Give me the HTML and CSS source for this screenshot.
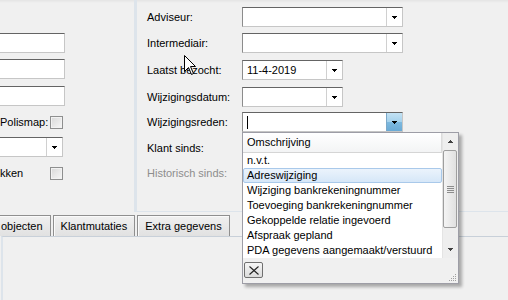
FILE: index.html
```html
<!DOCTYPE html>
<html lang="nl">

<head>
    <meta charset="UTF-8">
    <title>Relatie</title>
    <link rel="stylesheet" href="styles.css">
</head>

<body>
    <div class="window">
        <div class="top">
            <div class="left">
                <div class="lgrid">
                    <input class="txt" type="text">
                    <input class="txt" type="text">
                    <input class="txt" type="text">
                    <span class="lbl">Polismap:</span><span class="chk"></span>
                    <div class="combo lcombo">
                        <span class="val"></span>
                        <span class="btn"><svg width="5" height="3"><path d="M0 0h5v1h-1v1h-1v1h-1v-1h-1v-1h-1z" /></svg></span>
                    </div>
                    <span class="lbl">kken</span><span class="chk"></span>
                </div>
            </div>

            <div class="right">
                <div class="form">
                    <span class="lbl">Adviseur:</span>
                    <div class="combo long">
                        <span class="val"></span>
                        <span class="btn"><svg width="5" height="3"><path d="M0 0h5v1h-1v1h-1v1h-1v-1h-1v-1h-1z" /></svg></span>
                    </div>

                    <span class="lbl">Intermediair:</span>
                    <div class="combo long">
                        <span class="val"></span>
                        <span class="btn"><svg width="5" height="3"><path d="M0 0h5v1h-1v1h-1v1h-1v-1h-1v-1h-1z" /></svg></span>
                    </div>

                    <span class="lbl">Laatst bezocht:</span>
                    <div class="combo short">
                        <span class="val">11-4-2019</span>
                        <span class="btn"><svg width="5" height="3"><path d="M0 0h5v1h-1v1h-1v1h-1v-1h-1v-1h-1z" /></svg></span>
                    </div>

                    <span class="lbl">Wijzigingsdatum:</span>
                    <div class="combo short">
                        <span class="val"></span>
                        <span class="btn"><svg width="5" height="3"><path d="M0 0h5v1h-1v1h-1v1h-1v-1h-1v-1h-1z" /></svg></span>
                    </div>

                    <span class="lbl">Wijzigingsreden:</span>
                    <div class="combo long open">
                        <span class="val"><i class="caret"></i></span>
                        <span class="btn"><svg width="5" height="3"><path d="M0 0h5v1h-1v1h-1v1h-1v-1h-1v-1h-1z" /></svg></span>

                        <!-- opened dropdown -->
                        <div class="popup">
                            <div class="plist">
                                <div class="rows">
                                    <div class="ghead">Omschrijving</div>
                                    <div class="item">n.v.t.</div>
                                    <div class="item sel">Adreswijziging</div>
                                    <div class="item">Wijziging bankrekeningnummer</div>
                                    <div class="item">Toevoeging bankrekeningnummer</div>
                                    <div class="item">Gekoppelde relatie ingevoerd</div>
                                    <div class="item">Afspraak gepland</div>
                                    <div class="item">PDA gegevens aangemaakt/verstuurd</div>
                                </div>
                                <div class="vscroll">
                                    <span class="sbtn"><svg width="5" height="3"><path d="M2 0h1v1h1v1h1v1h-5v-1h1v-1h1z" /></svg></span>
                                    <span class="thumb"><svg width="7" height="7"><path d="M0 0h7v1h-7zM0 2h7v1h-7zM0 4h7v1h-7zM0 6h7v1h-7z" /></svg></span>
                                    <span class="track"></span>
                                    <span class="sbtn"><svg width="5" height="3"><path d="M0 0h5v1h-1v1h-1v1h-1v-1h-1v-1h-1z" /></svg></span>
                                </div>
                            </div>
                            <div class="pfoot">
                                <span class="close"><svg width="10" height="9"><path d="M0.5 0.5L9.5 8.5M9.5 0.5L0.5 8.5" /></svg></span>
                                <svg class="sizer" width="8" height="8"><path d="M6 0h1v1h-1zM4 2h1v1h-1zM6 2h1v1h-1zM2 4h1v1h-1zM4 4h1v1h-1zM6 4h1v1h-1zM0 6h1v1h-1zM2 6h1v1h-1zM4 6h1v1h-1zM6 6h1v1h-1z" /></svg>
                            </div>
                        </div>
                    </div>

                    <span class="lbl">Klant sinds:</span>
                    <span></span>

                    <span class="lbl off">Historisch sinds:</span>
                    <span></span>
                </div>
            </div>
        </div>

        <div class="tabs">
            <span class="tab">objecten</span>
            <span class="tab">Klantmutaties</span>
            <span class="tab">Extra gegevens</span>
        </div>
        <div class="page"></div>

        <!-- mouse pointer -->
        <svg class="pointer" width="14" height="22">
            <path d="M1.5 1.5L1.5 17.5L5.5 13.5L8.5 20.5L10.5 19.5L7.5 12.5L12.5 12.5Z" />
        </svg>
    </div>
</body>

</html>
```

FILE: styles.css
```css
body {
    margin: 0;
    background-color: #f0f0f0;
    font-family: "Liberation Sans", Arial, sans-serif;
    font-size: 11px;
    color: #000000;
}

.window {
    position: relative;
    width: 508px;
    height: 300px;
    overflow: hidden;
    background: linear-gradient(#e4e4e4, #f0f0f0 3px);
}

.top {
    display: flex;
    height: 212px;
}

/* left panel, cut off by the window */
.left {
    width: 134px;
    border-right: 3px solid #dde4eb;
    overflow: hidden;
}

.lgrid {
    display: grid;
    grid-template-columns: 50px 13px 2px;
    grid-template-rows: 26px 27px 26px 25px 26px 20px;
    align-items: start;
    padding-top: 33px;
}

.lgrid .lbl {
    grid-column: 1;
}

.lgrid .chk {
    grid-column: 2;
}

.txt {
    grid-column: 1 / span 3;
    margin: 0 0 0 -20px;
    height: 20px;
    box-sizing: border-box;
    border: 1px solid;
    border-color: #646464 #c6c6c6 #c6c6c6 #8c8c8c;
    background: #ffffff;
    padding: 0;
    outline: none;
}

.lbl {
    height: 20px;
    display: flex;
    align-items: center;
    white-space: nowrap;
}

.lbl.off {
    color: #8d8d8d;
}

.chk {
    width: 13px;
    height: 13px;
    margin-top: 4px;
    box-sizing: border-box;
    border: 1px solid #8e8f8f;
    background: linear-gradient(135deg, #d8d8d8, #f7f7f7);
    box-shadow: inset 0 0 0 1px #f2f2f2;
}

.combo {
    position: relative;
    display: flex;
    height: 20px;
    box-sizing: border-box;
    border: 1px solid;
    border-color: #646464 #c6c6c6 #c6c6c6 #8c8c8c;
    background: #ffffff;
}

.lcombo {
    grid-column: 1 / span 3;
    margin: 0 2px 0 -20px;
}

.combo .val {
    flex: 1;
    display: flex;
    align-items: center;
    padding-left: 4px;
}

.combo .btn {
    width: 16px;
    box-sizing: border-box;
    border-left: 1px solid #d0d0d0;
    display: flex;
    align-items: center;
    justify-content: center;
}

.combo.open .btn {
    border-left-color: #7ca9c9;
    background: linear-gradient(#c3e2f4, #a6d2ec 48%, #7db9df 52%, #6aaad5);
}

.caret {
    width: 1px;
    height: 13px;
    background: #000000;
}

.long {
    width: 161px;
}

.short {
    width: 101px;
}

/* right panel */
.right {
    flex: 1;
    border-bottom: 1px solid #dde4eb;
}

.form {
    display: grid;
    grid-template-columns: 95px auto;
    grid-template-rows: 26px 27px 27px 25px 26px 25px 25px;
    align-items: start;
    padding: 7px 0 0 10px;
}

/* dropdown list */
.popup {
    position: absolute;
    top: calc(100% + 1px);
    left: -1px;
    width: 217px;
    box-sizing: border-box;
    border: 1px solid #9d9da6;
    background: #f0f0f0;
    box-shadow: 3px 3px 3px rgba(0, 0, 0, 0.3);
    z-index: 5;
}

.plist {
    display: flex;
    height: 125px;
    background: #ffffff;
}

.rows {
    width: 199px;
    overflow: hidden;
}

.ghead {
    height: 19px;
    line-height: 19px;
    padding-left: 4px;
    border-bottom: 1px solid #d5d5d5;
    border-right: 1px solid #dcdcdc;
    background: linear-gradient(#ffffff, #f3f4f5);
}

.item {
    height: 15px;
    line-height: 15px;
    padding-left: 4px;
    white-space: nowrap;
}

.item.sel {
    padding-left: 3px;
    height: 13px;
    line-height: 13px;
    border: 1px solid #a9c9ea;
    border-radius: 2px;
    background: linear-gradient(#ebf3fc, #d6e7f8);
}

.vscroll {
    width: 16px;
    display: flex;
    flex-direction: column;
    background: #eeeeee;
    border-left: 1px solid #e4e4e4;
    box-sizing: border-box;
}

.sbtn {
    height: 17px;
    display: flex;
    align-items: center;
    justify-content: center;
}

.sbtn path {
    fill: #404040;
}

.thumb {
    height: 78px;
    margin: 0 1px 0 0;
    box-sizing: border-box;
    border: 1px solid #9e9e9e;
    border-radius: 2px;
    background: linear-gradient(90deg, #f4f4f4, #e0e0e0);
    display: flex;
    align-items: center;
    justify-content: center;
}

.thumb path {
    fill: #8c8c8c;
}

.track {
    flex: 1;
}

.pfoot {
    position: relative;
    height: 25px;
    padding: 4px 0 0 1px;
    box-sizing: border-box;
}

.close {
    width: 19px;
    height: 16px;
    box-sizing: border-box;
    border: 1px solid #707070;
    border-radius: 2px;
    background: linear-gradient(#f6f6f6, #dcdcdc);
    display: flex;
    align-items: center;
    justify-content: center;
}

.close path {
    stroke: #222222;
    stroke-width: 1.1;
}

.sizer {
    position: absolute;
    right: 1px;
    bottom: 1px;
}

.sizer path {
    fill: #a0a0a0;
}

/* tab strip */
.tabs {
    display: flex;
    gap: 2px;
    margin: 3px 0 0 -7px;
}

.tab {
    height: 20px;
    line-height: 20px;
    padding: 0 7px;
    border: 1px solid #8f8f8f;
    border-bottom: none;
    background: linear-gradient(#f0f0f0, #e1e1e1);
    box-shadow: inset 1px 1px 0 #fafafa;
    white-space: nowrap;
}

.page {
    height: 100px;
    margin-left: 1px;
    border-top: 1px solid #c8d0d9;
    border-left: 2px solid #dde4eb;
}

.pointer {
    position: absolute;
    left: 183px;
    top: 54px;
}

.pointer path {
    fill: #ffffff;
    stroke: #000000;
    stroke-width: 1;
}
```
